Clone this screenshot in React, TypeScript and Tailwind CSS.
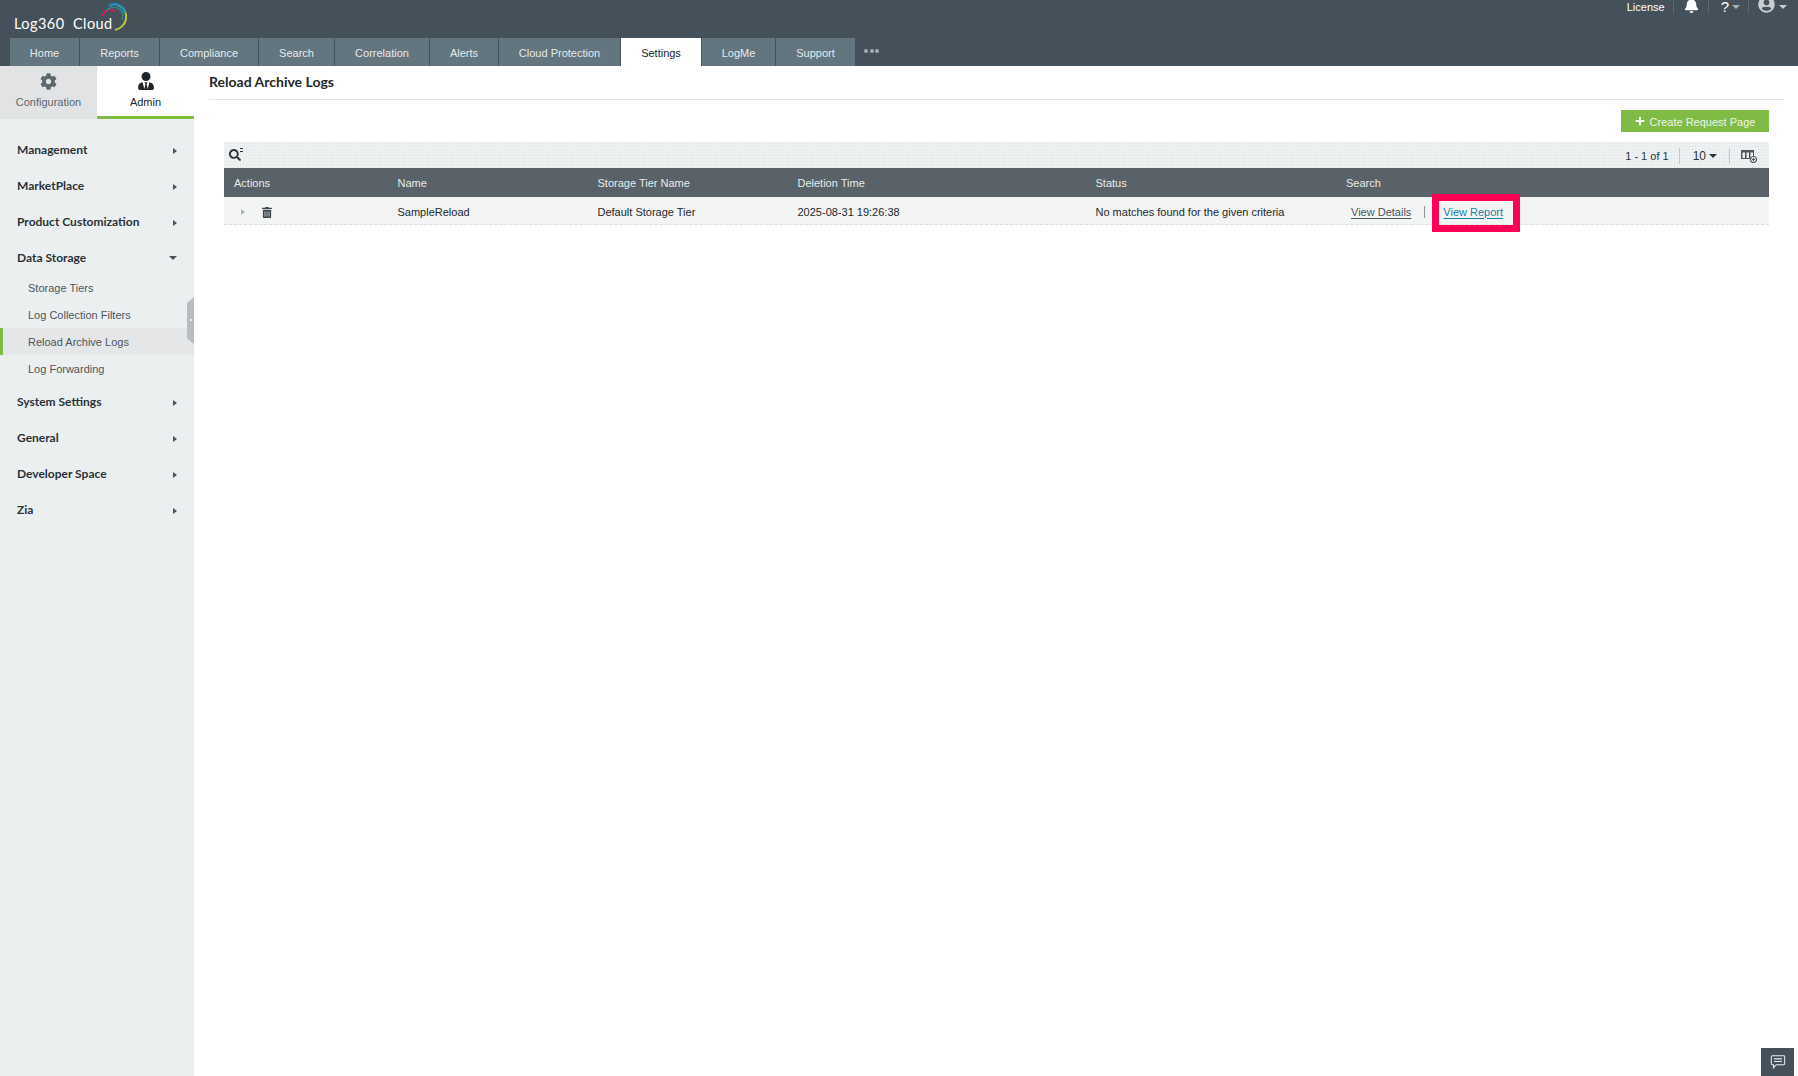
import { FaBell, FaCog, FaPlus, FaSearch, FaTrashAlt, FaUserCircle, FaUserTie } from "react-icons/fa";

const tabs = [
  { label: "Home", width: "w-[69px]" },
  { label: "Reports", width: "w-[79px]" },
  { label: "Compliance", width: "w-[98px]" },
  { label: "Search", width: "w-[75px]" },
  { label: "Correlation", width: "w-[94px]" },
  { label: "Alerts", width: "w-[68px]" },
  { label: "Cloud Protection", width: "w-[121px]" },
  { label: "Settings", width: "w-[80px]", active: true },
  { label: "LogMe", width: "w-[73px]" },
  { label: "Support", width: "w-[79px]" },
];

const menuTop = ["Management", "MarketPlace", "Product Customization"];
const menuBottom = ["System Settings", "General", "Developer Space", "Zia"];
const subMenu = ["Storage Tiers", "Log Collection Filters", "Reload Archive Logs", "Log Forwarding"];

const lato = "font-['Lato','Noto_Sans',sans-serif]";
const dots = "bg-[radial-gradient(#dfe2e3_0.6px,transparent_0.7px)] bg-[length:3px_3px]";

function CaretRight() {
  return <span className="mt-[2px] h-0 w-0 border-y-[3.5px] border-l-[4px] border-y-transparent border-l-[#4a5359]" />;
}

function CaretDown({ className }: { className: string }) {
  return <span className={`h-0 w-0 border-x-[4px] border-t-[4px] border-x-transparent ${className}`} />;
}

function MenuRow({ label, open }: { label: string; open?: boolean }) {
  return (
    <div className={`flex h-[36px] items-center justify-between pl-[17px] pr-[17px] text-[12px] font-bold text-[#2c3338] ${lato}`}>
      <span>{label}</span>
      {open ? <CaretDown className="border-t-[#4a5359]" /> : <CaretRight />}
    </div>
  );
}

function Logo() {
  return (
    <div className="relative mt-[6px] ml-[14px] flex h-[30px] w-[120px] items-end">
      <span className={`mb-[3px] whitespace-pre text-[14.5px] leading-[18px] tracking-[0.45px] text-white ${lato}`}>Log360  Cloud</span>
      <svg viewBox="0 0 30 30" className="absolute left-[86px] -top-[4px] h-[30px] w-[30px]" fill="none">
        <path d="M17 3 C22 4 27 9 26 17 C25 23 20 27 15 28" stroke="#b9c63c" strokeWidth="2" />
        <path d="M9 4 C15 0 23 3 25 11" stroke="#1f8fc0" strokeWidth="2.4" />
        <path d="M6 9 C10 4 18 4 22 10 C23 13 23 15 22 18" stroke="#2aa5a0" strokeWidth="1.4" strokeDasharray="2 1" />
        <path d="M2 14 C4 9 11 6 16 10" stroke="#f0145c" strokeWidth="1.8" strokeDasharray="2 1" />
      </svg>
    </div>
  );
}

function Header() {
  return (
    <header className="relative h-[66px] overflow-hidden bg-[#45515a]">
      <Logo />
      <div className="absolute right-[11px] top-0 flex h-[14px] items-center text-white">
        <span className="pr-[8px] text-[11px] leading-[12px]">License</span>
        <span className="h-[14px] w-px bg-[#5b6770]" />
        <FaBell className="ml-[10px] mr-[9px] -mt-[3px] h-[15px] w-[15px]" />
        <span className="h-[14px] w-px bg-[#5b6770]" />
        <span className="ml-[12px] text-[15px] leading-[14px]">?</span>
        <CaretDown className="ml-[3px] mr-[8px] border-t-[#aab2b8]" />
        <span className="h-[14px] w-px bg-[#5b6770]" />
        <FaUserCircle className="ml-[9px] -mt-[5px] h-[17px] w-[17px] text-[#c9ced2]" />
        <CaretDown className="ml-[4px] border-t-[#c9ced2]" />
      </div>
      <nav className="absolute bottom-0 left-[10px] flex h-[28px] items-stretch">
        {tabs.map((t) => (
          <div
            key={t.label}
            className={`mr-px flex items-center justify-center pt-[2px] text-[11px] ${t.width} ${
              t.active ? "bg-white text-[#1f2529]" : "bg-[#63757f] text-[#e6eaec]"
            }`}
          >
            {t.label}
          </div>
        ))}
        <div className="ml-[8px] mb-[3px] flex items-center gap-[1.5px]">
          <span className="h-[4px] w-[4px] rounded-full bg-[#a5adb3]" />
          <span className="h-[4px] w-[4px] rounded-full bg-[#a5adb3]" />
          <span className="h-[4px] w-[4px] rounded-full bg-[#a5adb3]" />
        </div>
      </nav>
    </header>
  );
}

function Sidebar() {
  return (
    <aside className="relative w-[194px] shrink-0 bg-[#ebeff0]">
      <div className="flex h-[53px]">
        <div className="flex w-[97px] flex-col items-center bg-[#e1e3e4] pt-[7px] text-[11px] text-[#5c676e]">
          <FaCog className="h-[17px] w-[17px]" />
          <span className="mt-[1px] leading-[22px]">Configuration</span>
        </div>
        <div className="flex w-[97px] flex-col items-center border-b-[3px] border-[#7fbb45] bg-white pt-[6px] text-[11px] text-[#1f2529]">
          <FaUserTie className="h-[18px] w-[18px]" />
          <span className="mt-[1px] leading-[22px]">Admin</span>
        </div>
      </div>
      <div className="pt-[13px]">
        {menuTop.map((m) => (
          <MenuRow key={m} label={m} />
        ))}
        <MenuRow label="Data Storage" open />
        <div className="-mt-[2px] mb-[2px]">
          {subMenu.map((s) => (
            <div
              key={s}
              className={`flex h-[27px] items-center pl-[28px] pt-px text-[11px] text-[#4c565d] ${
                s === "Reload Archive Logs" ? "border-l-[3px] border-[#7fbb45] bg-[#e4e6e7] !pl-[25px]" : ""
              }`}
            >
              {s}
            </div>
          ))}
        </div>
        {menuBottom.map((m) => (
          <MenuRow key={m} label={m} />
        ))}
      </div>
      <svg viewBox="0 0 7 47" className="absolute left-[187px] top-[231px] h-[47px] w-[7px]">
        <path d="M7 0 L7 47 L3 44 L0 41 L0 6 Z" fill="#b9bdbf" />
        <circle cx="4" cy="23" r="1" fill="#fff" />
      </svg>
    </aside>
  );
}

function ColumnsIcon() {
  return (
    <svg viewBox="0 0 16 14" className="h-[14px] w-[16px]" fill="none">
      <path d="M0 1 H13 V10 H0 Z" fill="#4b565d" />
      <path d="M1.5 3.5 H4 V9 H1.5 Z M5.5 3.5 H8 V9 H5.5 Z M9.5 3.5 H12 V9 H9.5 Z" fill="#f0f2f3" />
      <circle cx="12.5" cy="10.5" r="3" fill="#f0f2f3" stroke="#4b565d" strokeWidth="1.2" />
      <path d="M11 10.5 H14 M12.5 9 V12" stroke="#4b565d" strokeWidth="1" />
    </svg>
  );
}

const cols = "grid grid-cols-[173.5px_200px_200px_298px_250.5px_1fr]";

function ReportTable() {
  return (
    <div className="ml-[30px] mr-[29px] mt-[10px] text-[11px]">
      <div className={`flex h-[26px] items-center justify-between bg-[#eef1f2] pl-[5px] pr-[12px] text-[#2c3338] ${dots}`}>
        <span className="relative">
          <FaSearch className="h-[12px] w-[12px] text-[#2c353b]" />
          <span className="absolute -right-[2px] -top-[1px] h-[4px] w-[3px] border-y border-[#2c353b]" />
        </span>
        <div className="flex items-center pt-[2px]">
          <span>1 - 1 of 1</span>
          <span className="ml-[10px] mr-[13px] h-[16px] w-px bg-[#c3c8cb]" />
          <span className="text-[12px] leading-none">10</span>
          <CaretDown className="ml-[3px] border-t-[#2c3338]" />
          <span className="ml-[12px] mr-[11px] h-[16px] w-px bg-[#c3c8cb]" />
          <ColumnsIcon />
        </div>
      </div>
      <div className={`${cols} h-[29px] items-center bg-[#586268] pt-px text-[#e8ebed]`}>
        <span className="pl-[10px]">Actions</span>
        <span>Name</span>
        <span>Storage Tier Name</span>
        <span>Deletion Time</span>
        <span>Status</span>
        <span>Search</span>
      </div>
      <div className={`${cols} h-[28px] items-center border-b border-dashed border-[#dcdfe0] bg-[#f3f4f4] pt-[3px] text-[#23292d]`}>
        <div className="flex items-center pl-[17px]">
          <span className="h-0 w-0 border-y-[3px] border-l-[4px] border-y-transparent border-l-[#aab3a8]" />
          <FaTrashAlt className="ml-[17px] h-[11px] w-[10px] text-[#3a444b]" />
        </div>
        <span>SampleReload</span>
        <span>Default Storage Tier</span>
        <span>2025-08-31 19:26:38</span>
        <span>No matches found for the given criteria</span>
        <div className="flex items-center pl-[5px]">
          <span className="text-[#4b565d] underline underline-offset-2">View Details</span>
          <span className="mx-[13px] h-[12px] w-px bg-[#8d969b]" />
          <span className="relative ml-[5px] text-[#1b7fa8] underline underline-offset-2">
            View Report
            <span className="absolute -left-[11px] -top-[10px] h-[38px] w-[88px] border-[7px] border-[#ff0055]" />
          </span>
        </div>
      </div>
    </div>
  );
}

export default function App() {
  return (
    <div className="flex h-[1076px] w-[1798px] flex-col overflow-hidden bg-white font-['Liberation_Sans',Arial,sans-serif]">
      <Header />
      <div className="flex min-h-0 flex-1">
        <Sidebar />
        <main className="relative flex-1">
          <div className="ml-[15px] mr-[14px] flex h-[34px] items-start border-b border-[#e2e4e5] pt-[7px]">
            <h1 className={`text-[14px] font-bold leading-[18px] text-[#23292d] ${lato}`}>Reload Archive Logs</h1>
          </div>
          <div className="mr-[29px] mt-[10px] flex justify-end">
            <button className="flex h-[22px] w-[148px] items-center justify-center gap-[5px] bg-[#7fbb45] pt-[2px] text-[11px] text-[#eef5e6]">
              <FaPlus className="-mt-[2px] h-[10px] w-[10px] text-white" />
              Create Request Page
            </button>
          </div>
          <ReportTable />
          <div className="absolute bottom-0 right-[4px] flex h-[28px] w-[33px] items-center justify-center bg-[#45515a]">
            <svg viewBox="0 0 18 18" className="h-[16px] w-[16px]" fill="none" stroke="#e6eaec" strokeWidth="1.2">
              <path d="M2.5 2 H15.5 A1 1 0 0 1 16.5 3 V11 A1 1 0 0 1 15.5 12 H7 L4 15.5 V12 H2.5 A1 1 0 0 1 1.5 11 V3 A1 1 0 0 1 2.5 2 Z" />
              <path d="M4.5 5.5 H13.5 M4.5 8.5 H13.5" />
            </svg>
          </div>
        </main>
      </div>
    </div>
  );
}
